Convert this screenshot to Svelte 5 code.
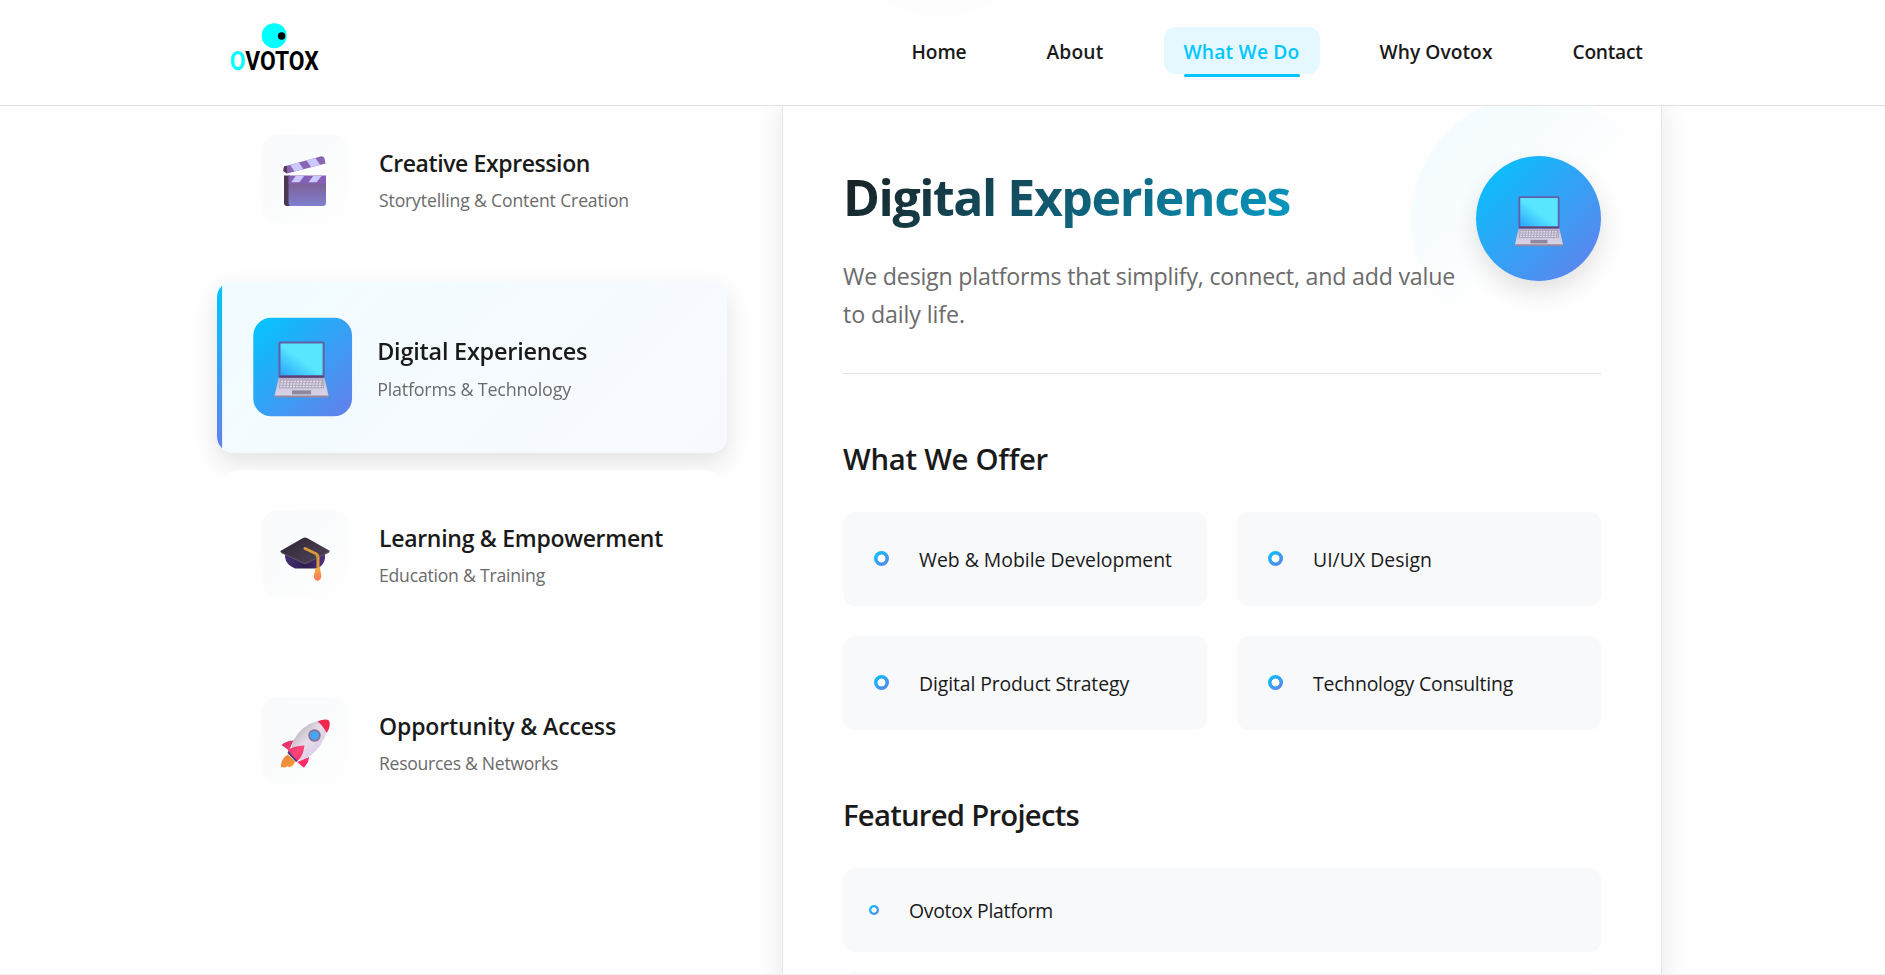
<script>
  const nav = [
    { label: 'Home', w: 55 },
    { label: 'About', w: 57 },
    { label: 'What We Do', w: 116, active: true },
    { label: 'Why Ovotox', w: 113 },
    { label: 'Contact', w: 70 }
  ];
  const areas = [
    { icon: 'clapper', title: 'Creative Expression', tw: 211, sub: 'Storytelling & Content Creation', sw: 250 },
    { icon: 'laptop', title: 'Digital Experiences', tw: 206, sub: 'Platforms & Technology', sw: 190, active: true },
    { icon: 'cap', title: 'Learning & Empowerment', tw: 284, sub: 'Education & Training', sw: 166 },
    { icon: 'rocket', title: 'Opportunity & Access', tw: 237, sub: 'Resources & Networks', sw: 179 }
  ];
  const offers = [
    { label: 'Web & Mobile Development', w: 253 },
    { label: 'UI/UX Design', w: 119 },
    { label: 'Digital Product Strategy', w: 210 },
    { label: 'Technology Consulting', w: 200 }
  ];

  // Spreads or tightens the letters so a label takes the given width.
  function fit(node, width) {
    const range = document.createRange();
    const apply = () => {
      node.style.letterSpacing = '0px';
      range.selectNodeContents(node);
      const scale = node.closest('.area.active') ? 1.02 : 1;
      const natural = range.getBoundingClientRect().width / scale;
      node.style.letterSpacing = (width - natural) / node.textContent.length + 'px';
    };
    apply();
    document.fonts.ready.then(apply);
  }
</script>

{#snippet laptop()}
  <svg viewBox="0 0 56 56" class="glyph">
    <defs>
      <linearGradient id="screen" x1="0" y1="1" x2="1" y2="0">
        <stop offset="0" stop-color="#2aa5ff" /><stop offset=".5" stop-color="#58e6ff" /><stop offset="1" stop-color="#58e6ff" />
      </linearGradient>
      <linearGradient id="base" x1="0" y1="0" x2="0" y2="1">
        <stop offset="0" stop-color="#b9b0c8" /><stop offset=".5" stop-color="#d2cbdf" /><stop offset="1" stop-color="#d9d3e6" />
      </linearGradient>
    </defs>
    <rect x="5" y="1.5" width="46" height="36" rx="1.5" fill="#6160a6" />
    <rect x="6" y="35.5" width="44" height="2" fill="#63406f" />
    <rect x="7" y="3.4" width="42" height="31.6" fill="url(#screen)" />
    <path d="M5 37.8h46l4 18.2H1z" fill="url(#base)" />
    <path d="M1.2 55.2h53.6v2.2H1.2z" fill="#94899f" />
    <path d="M6.5 39.5h43l1 8.6h-45z" fill="#aaa2b8" />
    <path d="M7.4 41.3h41.2M7 43.8h42M6.7 46.4h42.6" stroke="#ece7f3" stroke-width="1.4" stroke-dasharray="2.1 1.1" />
    <path d="M18.5 50.2h19v4h-19z" fill="#8f869f" />
  </svg>
{/snippet}

{#snippet clapper()}
  <svg viewBox="0 0 44 50" class="glyph">
    <defs>
      <linearGradient id="slate" x1="0" y1="0" x2="0" y2="1">
        <stop offset="0" stop-color="#7d5f92" /><stop offset="1" stop-color="#7f7fd0" />
      </linearGradient>
      <clipPath id="arm"><path d="M1 10.500 37.500.4q3-.7 4 2l1 5L4 17.500.3 15Z" /></clipPath>
      <clipPath id="bar"><path d="M5.5 19.5H43v8H5.5z" /></clipPath>
    </defs>
    <g clip-path="url(#arm)">
      <path d="M0 0h44v20H0z" fill="#8866b4" />
      <path d="m6.500 8 8.500-3 6 9-8.500 3ZM23 3.500l8.500-3 6 9-8.500 3Z" fill="#cbc8ff" />
      <path d="M0 9.8 4 9v9H0z" fill="#513c5a" />
    </g>
    <path d="M1 19.5h6V50H4q-3 0-3-3z" fill="#493953" />
    <path d="M5.5 26H43v20.500q0 3.500-3 3.500H8q-2.500 0-2.500-3z" fill="url(#slate)" />
    <g clip-path="url(#bar)">
      <path d="M5 19h39v9H5z" fill="#8560b6" />
      <path d="m13 19.500h8.500l-5 6.800H8.300zM30.500 19.500H39l-5.500 6.800h-8z" fill="#cbc8ff" />
    </g>
  </svg>
{/snippet}

{#snippet cap()}
  <svg viewBox="0 0 50 45" class="glyph">
    <defs>
      <linearGradient id="board" x1="0" y1="0" x2="1" y2="1">
        <stop offset="0" stop-color="#2c2432" /><stop offset="1" stop-color="#51475b" />
      </linearGradient>
      <linearGradient id="skull" x1="0" y1="0" x2="1" y2="0">
        <stop offset="0" stop-color="#46306d" /><stop offset=".5" stop-color="#2f1c50" /><stop offset="1" stop-color="#513080" />
      </linearGradient>
      <linearGradient id="tassel" x1="0" y1="0" x2="0" y2="1">
        <stop offset="0" stop-color="#efad43" /><stop offset="1" stop-color="#ff7359" />
      </linearGradient>
    </defs>
    <path d="M5 14h40v7q-.5 6-7 10.500H15Q6 28 5 20z" fill="url(#skull)" />
    <path d="M.8 13.800 23 1q2-1 4 0l22.200 12.600q1 .8 0 1.600L27 26q-2 1-4 0L.8 15.200q-.8-.7 0-1.400Z" fill="url(#board)" />
    <path d="M1 15.500 23 26q2 1 4 0l22-11" fill="none" stroke="#65586d" />
    <path d="m25 11.500 10.500 5q2.500 1.300 2.500 4.500v11" fill="none" stroke="#d9983b" stroke-width="3" stroke-linecap="round" />
    <path d="M35.500 31h4.500l.7 4q2 7-3 9-5.500-1.500-3.200-8z" fill="url(#tassel)" />
  </svg>
{/snippet}

{#snippet rocket()}
  <svg viewBox="0 0 50 50" class="glyph">
    <defs>
      <linearGradient id="hull" x1=".2" y1=".2" x2=".8" y2=".8">
        <stop offset="0" stop-color="#bfb8c2" /><stop offset=".45" stop-color="#e6dde9" /><stop offset="1" stop-color="#dccbe9" />
      </linearGradient>
      <linearGradient id="fin" x1="0" y1="0" x2="1" y2="1">
        <stop offset="0" stop-color="#d82b65" /><stop offset=".5" stop-color="#ff4679" /><stop offset="1" stop-color="#f91c62" />
      </linearGradient>
      <linearGradient id="fire" x1="0" y1="0" x2="1" y2="1">
        <stop offset="0" stop-color="#e48343" /><stop offset="1" stop-color="#ff9b33" />
      </linearGradient>
    </defs>
    <path d="M8 35.500Q1 39 .8 48.500l2-.5 1.800.8 2.400-1.500 2.500 1Q14 47 15 42.500z" fill="url(#fire)" />
    <path d="M1.500 26q5-4.500 12-4.500L9 31.500zM29 38l-1 5-4 5.800L17 43z" fill="url(#fin)" />
    <path d="m11.500 28 2-7Q22 6 38 2l9 10Q43 27 29.500 37.500l-9 4z" fill="url(#hull)" />
    <path d="M37.500 2.500Q43 0 47.500.8 50 1.500 49.800 6q-.5 4-3 8-4-7.500-9.300-11.500Z" fill="#ee284f" />
    <path d="M7.500 34 16 43l2-1.500-9.500-10z" fill="#463b85" />
    <path d="M8 31.500Q12 27 24.500 26.500q-1.500 11-7 15.500Z" fill="url(#fin)" />
    <circle cx="34.500" cy="16.500" r="6.200" fill="#85708f" />
    <circle cx="34.500" cy="16.500" r="4.600" fill="#4aa4f5" />
  </svg>
{/snippet}

<div class="page">
  <header>
    <div class="inner">
      <svg class="logo" width="104" height="66" viewBox="0 0 104 66" role="img" aria-label="Ovotox">
        <circle cx="51.200" cy="17.700" r="12.500" fill="#0ff" />
        <circle cx="58.600" cy="18" r="3.700" fill="#000" />
        <text x="6.800" y="51.800" textLength="89" lengthAdjust="spacingAndGlyphs"><tspan fill="#0ff">O</tspan>VOTOX</text>
      </svg>
      <nav>
        {#each nav as item}
          <a class:active={item.active} href="#top" style:width="{item.w + 40}px"><span use:fit={item.w}>{item.label}</span></a>
        {/each}
      </nav>
    </div>
    <span class="glow"></span>
  </header>

  <main>
    <div class="areas">
      {#each areas as a}
        <div class="area" class:active={a.active}>
          <div class="tile">
            {#if a.icon === 'clapper'}{@render clapper()}{:else if a.icon === 'laptop'}{@render laptop()}{:else if a.icon === 'cap'}{@render cap()}{:else}{@render rocket()}{/if}
          </div>
          <div class="label">
            <h3><span use:fit={a.tw}>{a.title}</span></h3>
            <p><span use:fit={a.sw}>{a.sub}</span></p>
          </div>
        </div>
      {/each}
    </div>

    <section class="panel">
      <div class="intro">
        <div class="copy">
          <h1><span use:fit={447}>Digital Experiences</span></h1>
          <p><span use:fit={612}>We design platforms that simplify, connect, and add value</span><br /><span use:fit={122}>to daily life.</span></p>
        </div>
        <div class="badge">{@render laptop()}</div>
      </div>

      <h2><span use:fit={205}>What We Offer</span></h2>
      <div class="offers">
        {#each offers as o}
          <div class="offer"><i></i><span use:fit={o.w}>{o.label}</span></div>
        {/each}
      </div>

      <h2><span use:fit={236}>Featured Projects</span></h2>
      <div class="projects">
        <div class="project"><i></i><span use:fit={144}>Ovotox Platform</span></div>
        <div class="project"></div>
      </div>
    </section>
  </main>
</div>

<style>
  :global(body) {
    background: #fefefe;
    overflow: hidden;
  }
  * {
    box-sizing: border-box;
    margin: 0;
  }
  .page {
    height: 975px;
    overflow: hidden;
    border-bottom: 1px solid #f0f0f2;
    font-family: 'Open Sans', 'Noto Sans', sans-serif;
    color: #1a1a1a;
  }
  span {
    white-space: nowrap;
  }
  header {
    position: relative;
    z-index: 5;
    height: 106px;
    background: #fefefe;
    border-bottom: 1px solid #e2e2e4;
    overflow: hidden;
  }
  .glow {
    position: absolute;
    left: 840px;
    top: -184px;
    width: 200px;
    height: 200px;
    border-radius: 50%;
    background: #fdfdfd;
  }
  .inner {
    width: 1440px;
    height: 105px;
    margin: 0 auto;
    display: flex;
    align-items: center;
    justify-content: space-between;
  }
  .logo {
    display: block;
    margin-bottom: 3px;
  }
  .logo text {
    font: 700 25px Roboto, sans-serif;
  }
  nav {
    display: flex;
    gap: 40px;
    margin-bottom: 4px;
  }
  nav a {
    position: relative;
    padding: 0 20px;
    height: 47px;
    line-height: 50px;
    border-radius: 12px;
    font-size: 19.200px;
    font-weight: 600;
    color: inherit;
    text-decoration: none;
  }
  nav a.active {
    color: #00c6ff;
    background: #e5f8ff;
  }
  nav a.active::after {
    content: '';
    position: absolute;
    left: 20px;
    right: 20px;
    bottom: -3px;
    height: 3px;
    border-radius: 2px;
    background: #00c6ff;
  }
  main {
    width: 1441px;
    padding-right: 1px;
    margin: -11px auto 0;
    display: grid;
    grid-template-columns: 500px 880px;
    gap: 60px;
    align-items: start;
  }
  .areas {
    display: flex;
    flex-direction: column;
    gap: 20px;
  }
  .area {
    height: 167.500px;
    display: flex;
    align-items: center;
    gap: 30px;
    padding: 0 40px;
    border-radius: 16px;
    background: #fefefe;
  }
  .area.active {
    position: relative;
    z-index: 0;
    transform: scale(1.02);
    background: linear-gradient(135deg, #f1fcff, #f8f9fe);
    box-shadow: 0 10px 24px rgba(0, 0, 0, 0.11);
    overflow: hidden;
  }
  .area:nth-child(3) {
    position: relative;
    z-index: 1;
  }
  .area.active::before {
    content: '';
    position: absolute;
    left: 0;
    top: 0;
    bottom: 0;
    width: 5px;
    background: linear-gradient(180deg, #00c6ff, #667eea);
  }
  .tile {
    flex: none;
    width: 87px;
    height: 88px;
    border-radius: 16px;
    display: grid;
    place-items: center;
    background: linear-gradient(135deg, #f8fafb, #fefefe);
  }
  .area.active .tile {
    width: 88px;
    margin-right: -1px;
    transform: scale(1.1);
    background: linear-gradient(135deg, #00c6ff, #667eea);
  }
  .glyph {
    display: block;
    overflow: visible;
    width: 50px;
  }
  .area.active .glyph {
    margin: 2px 2px 0 0;
  }
  .area:first-child .glyph {
    width: 44px;
    margin: 5px 2px 0 0;
  }
  .area:nth-child(3) .glyph {
    margin: 11px 1px 0 0;
  }
  .area:nth-child(4) .glyph {
    margin: 6px 1px 0 0;
  }
  .label {
    padding-top: 2px;
  }
  h3 {
    height: 38px;
    line-height: 38px;
    font-size: 23px;
    font-weight: 600;
  }
  .label p {
    margin-top: 3px;
    line-height: 30px;
    font-size: 17.600px;
    color: #6b6b6b;
  }
  .panel {
    position: relative;
    height: 1000px;
    padding: 61px 60px 60px;
    border: 1px solid #e4e5e8;
    border-top: 0;
    background: #fefefe;
    box-shadow: 0 10px 26px rgba(0, 0, 0, 0.09);
  }
  .panel::before {
    content: '';
    position: absolute;
    top: 0;
    right: 0;
    width: 250px;
    height: 250px;
    border-radius: 50%;
    background: linear-gradient(135deg, #f0fbff, #fefefe 55%);
  }
  .intro {
    position: relative;
    display: flex;
    justify-content: space-between;
    height: 218px;
    border-bottom: 1px solid #e3e4e6;
  }
  .copy {
    width: 613px;
  }
  h1 {
    height: 82px;
    line-height: 83px;
    font-size: 50px;
    font-weight: 700;
    color: transparent;
    background: linear-gradient(135deg, #1a1a1a, #00c6ff);
    background-clip: text;
  }
  .copy p {
    margin-top: 19px;
    line-height: 38px;
    font-size: 23.200px;
    color: #6b6b6b;
  }
  .badge {
    width: 125px;
    height: 125px;
    border-radius: 50%;
    display: grid;
    place-items: center;
    background: linear-gradient(135deg, #00c6ff, #667eea);
    box-shadow: 0 10px 24px rgba(0, 0, 0, 0.12);
  }
  .badge .glyph {
    margin-top: 3px;
  }
  h2 {
    margin: 60px 0 30px;
    height: 48px;
    line-height: 51px;
    font-size: 29.300px;
    font-weight: 600;
  }
  .offers {
    display: grid;
    grid-template-columns: 1fr 1fr;
    grid-auto-rows: 93.800px;
    gap: 30px;
  }
  .offer,
  .project {
    display: flex;
    align-items: center;
    gap: 30px;
    padding: 0 31px;
    border-radius: 12px;
    background: #f8f9fb;
    font-size: 19.400px;
  }
  .offer span,
  .project span {
    padding-top: 2px;
  }
  .projects {
    display: grid;
    grid-auto-rows: 84px;
    gap: 20px;
  }
  .project {
    padding: 0 26px;
  }
  i {
    width: 15px;
    height: 15px;
    border-radius: 50%;
    background: radial-gradient(circle, #fff 3.600px, transparent 4.300px), linear-gradient(135deg, #00c6ff, #667eea);
  }
  .project i {
    width: 10px;
    height: 10px;
    background: radial-gradient(circle, #fff 2.300px, transparent 3px), linear-gradient(135deg, #00c6ff, #667eea);
  }
</style>
